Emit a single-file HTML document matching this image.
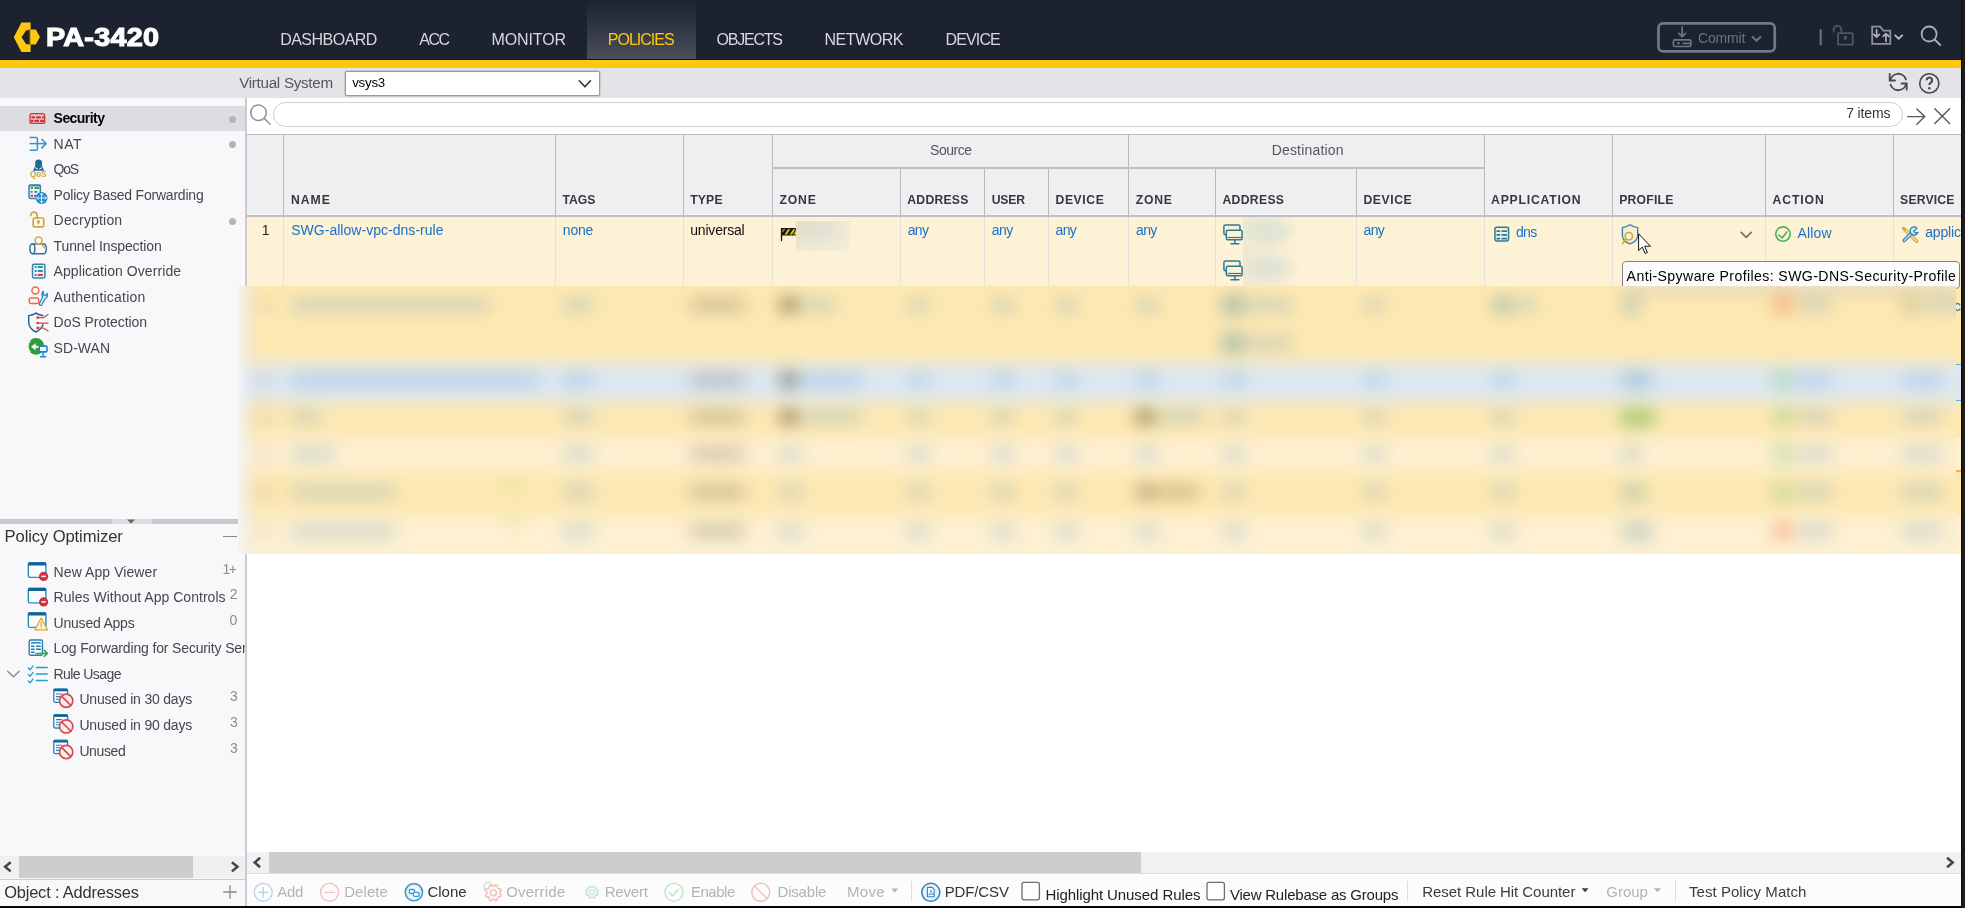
<!DOCTYPE html><html><head><meta charset="utf-8"><title>PA-3420</title><style>
html,body{margin:0;padding:0}
body{width:1965px;height:908px;overflow:hidden;position:relative;background:#fff;font-family:"Liberation Sans",sans-serif;}
.t{position:absolute;white-space:nowrap;}
#w{position:absolute;left:0;top:0;width:1965px;height:908px;overflow:hidden;will-change:transform;}
.b{position:absolute;}
svg{position:absolute;overflow:visible}
</style></head><body><div id="w">
<div class="b" style="left:0px;top:0px;width:1965px;height:60px;background:#1d2231;"></div>
<div class="b" style="left:587px;top:0px;width:109px;height:60px;background:#2f3442;background:linear-gradient(to bottom,#1d2231 0%,#2f3442 42%,#4c505c 100%);"></div>
<div class="b" style="left:0px;top:59px;width:1965px;height:1px;background:#0d1230;"></div>
<div class="b" style="left:0px;top:60px;width:1965px;height:8px;background:#fdc80d;"></div>
<div class="b" style="left:0px;top:68px;width:1965px;height:30px;background:#e3e3e8;"></div>
<svg style="left:0;top:0;pointer-events:none" width="1965" height="908" viewBox="0 0 1965 908" fill="none" stroke-linecap="round" stroke-linejoin="round"><path d="M21.4 22.6H30.6V30.2H26.2L21.6 37.2L26.2 44.2H30.6V52H21.4L13.8 37.2Z" fill="#fdc80d" stroke="none"/><path d="M30.2 29.6H35.8L39.9 36.9L35.8 44.6H30.2Z" fill="#fdc80d" stroke="none"/><path d="M29.3 29.6V44.6" stroke="#6a5a1c" stroke-width="0.9"/></svg>
<span class="t" style="left:46.30px;top:25.00px;font-size:25.4px;line-height:25.4px;color:#fff;font-weight:700;-webkit-text-stroke:1.1px #fff;transform-origin:0 0;transform:scaleX(1.135);letter-spacing:0.2px;">PA-3420</span>
<span class="t" style="left:280.20px;top:32.00px;font-size:16px;line-height:16px;color:#d6d8dc;letter-spacing:-0.522px;">DASHBOARD</span>
<span class="t" style="left:419.30px;top:32.00px;font-size:16px;line-height:16px;color:#d6d8dc;letter-spacing:-1.525px;">ACC</span>
<span class="t" style="left:491.50px;top:32.00px;font-size:16px;line-height:16px;color:#d6d8dc;letter-spacing:-0.125px;">MONITOR</span>
<span class="t" style="left:607.80px;top:32.00px;font-size:16px;line-height:16px;color:#fdc80d;letter-spacing:-0.993px;">POLICIES</span>
<span class="t" style="left:716.50px;top:32.00px;font-size:16px;line-height:16px;color:#d6d8dc;letter-spacing:-1.208px;">OBJECTS</span>
<span class="t" style="left:824.50px;top:32.00px;font-size:16px;line-height:16px;color:#d6d8dc;letter-spacing:-0.458px;">NETWORK</span>
<span class="t" style="left:945.50px;top:32.00px;font-size:16px;line-height:16px;color:#d6d8dc;letter-spacing:-0.865px;">DEVICE</span>
<svg style="left:0;top:0;pointer-events:none" width="1965" height="908" viewBox="0 0 1965 908" fill="none" stroke-linecap="round" stroke-linejoin="round"><rect x="1658.450" y="23.400" width="116.300" height="27.950" rx="4.600" stroke="#727887" stroke-width="2.700"/><g stroke="#6f7584" stroke-width="1.700"><path d="M1682.200 27.200v9.200M1678.900 33.400l3.300 3.300 3.300-3.300"/><rect x="1673.400" y="39.900" width="17.500" height="6.600" rx="1.600"/><path d="M1683.300 43.300h7"/><circle cx="1678.500" cy="43.300" r=".800" fill="none" stroke-width="1.100"/><path d="M1752.600 37l3.900 3.700 3.900-3.700" stroke-width="1.900"/></g></svg>
<span class="t" style="left:1698.10px;top:31.00px;font-size:14px;line-height:14px;color:#6d7383;letter-spacing:-0.190px;">Commit</span>
<svg style="left:0;top:0;pointer-events:none" width="1965" height="908" viewBox="0 0 1965 908" fill="none" stroke-linecap="round" stroke-linejoin="round"><path d="M1820.700 29.200v16" stroke="#6c7280" stroke-width="2.100" stroke-linecap="butt"/><g stroke="#4e5564" stroke-width="1.800"><rect x="1838" y="33.100" width="14.700" height="11.600" rx=".800"/><path d="M1833.600 31.500v-1.800a3.900 3.900 0 0 1 7.800 0v3"/></g><path d="M1845.300 35.600a1.600 1.600 0 0 1 1.600 1.600c0 1.300-1 2.400-1.600 4.300c-.6-1.900-1.600-3-1.600-4.300a1.600 1.600 0 0 1 1.600-1.600z" fill="#4e5564" stroke="none"/><path d="M1872.200 26.700h8l3.200 4h6.900v13.100h-18.100z" stroke="#8e939e" stroke-width="1.800" stroke-linejoin="miter"/><g stroke="#aeb3bd" stroke-width="1.700"><path d="M1876.600 29.800v7M1873.800 34.300l2.800 2.900 2.800-2.900"/><path d="M1885.900 41.500v-7.800M1883.100 36.400l2.800-2.900 2.800 2.900"/><path d="M1895.200 35.400l3.500 3.400 3.500-3.400" stroke-width="2"/></g><g stroke="#a9aeb8" stroke-width="1.800"><circle cx="1929.100" cy="34" r="7.500"/><path d="M1934.600 39.500l5.700 5.500"/></g></svg>
<span class="t" style="left:239.20px;top:75.00px;font-size:15.2px;line-height:15.2px;color:#55575c;letter-spacing:-0.288px;">Virtual System</span>
<div class="b" style="left:345px;top:71px;width:253px;height:23px;background:#fff;border:1px solid #9a9a9a;border-radius:2px;box-shadow:0 0 0 0.5px #b5b5b5;"></div>
<span class="t" style="left:352.20px;top:76.00px;font-size:13.3px;line-height:13.3px;color:#000;letter-spacing:-0.250px;">vsys3</span>
<svg style="left:0;top:0;pointer-events:none" width="1965" height="908" viewBox="0 0 1965 908" fill="none" stroke-linecap="round" stroke-linejoin="round"><path d="M579.3 80.8L584.9 86.8L590.5 80.8" stroke="#333" stroke-width="1.6"/></svg>
<svg style="left:0;top:0;pointer-events:none" width="1965" height="908" viewBox="0 0 1965 908" fill="none" stroke-linecap="round" stroke-linejoin="round"><g stroke="#48484d" stroke-width="1.800"><path d="M1890.300 80.400A8.050 8.050 0 0 1 1905.900 79.400"/><path d="M1889.700 74v6.500h5.300" stroke-linejoin="miter"/><path d="M1906.100 83.600A8.050 8.050 0 0 1 1890.500 84.600"/><path d="M1906.700 89.700v-6.200h-5.200" stroke-linejoin="miter"/></g><circle cx="1929.300" cy="83.400" r="9.600" stroke="#48484d" stroke-width="1.600"/><path d="M1926.700 80.300a2.700 2.700 0 1 1 4.100 2.300c-1 .600-1.500 1.200-1.500 2.500" stroke="#48484d" stroke-width="2.100" stroke-linecap="butt"/><circle cx="1929.300" cy="88.300" r="1.250" fill="#48484d" stroke="none"/></svg>
<div class="b" style="left:0px;top:98px;width:245px;height:808px;background:#f8f8fa;"></div>
<div class="b" style="left:245.2px;top:98px;width:1.6000000000000227px;height:808px;background:#cbcad2;"></div>
<div class="b" style="left:0px;top:106px;width:245px;height:25px;background:#dddde1;"></div>
<span class="t" style="left:53.60px;top:111.00px;font-size:14px;line-height:14px;color:#000;font-weight:700;letter-spacing:-0.550px;">Security</span>
<span class="t" style="left:53.60px;top:137.00px;font-size:14px;line-height:14px;color:#45474d;letter-spacing:0.500px;">NAT</span>
<span class="t" style="left:53.60px;top:162.00px;font-size:14px;line-height:14px;color:#45474d;letter-spacing:-1.200px;">QoS</span>
<span class="t" style="left:53.60px;top:188.00px;font-size:14px;line-height:14px;color:#45474d;letter-spacing:-0.217px;">Policy Based Forwarding</span>
<span class="t" style="left:53.60px;top:213.00px;font-size:14px;line-height:14px;color:#45474d;letter-spacing:0.181px;">Decryption</span>
<span class="t" style="left:53.60px;top:239.00px;font-size:14px;line-height:14px;color:#45474d;letter-spacing:-0.119px;">Tunnel Inspection</span>
<span class="t" style="left:53.60px;top:264.00px;font-size:14px;line-height:14px;color:#45474d;letter-spacing:0.072px;">Application Override</span>
<span class="t" style="left:53.60px;top:290.00px;font-size:14px;line-height:14px;color:#45474d;letter-spacing:0.235px;">Authentication</span>
<span class="t" style="left:53.60px;top:315.00px;font-size:14px;line-height:14px;color:#45474d;letter-spacing:-0.048px;">DoS Protection</span>
<span class="t" style="left:53.60px;top:341.00px;font-size:14px;line-height:14px;color:#45474d;letter-spacing:0.050px;">SD-WAN</span>
<div class="b" style="left:229px;top:115.7px;width:7.2px;height:7.2px;border-radius:50%;background:#b4b4b6;"></div>
<div class="b" style="left:229px;top:141.2px;width:7.2px;height:7.2px;border-radius:50%;background:#b4b4b6;"></div>
<div class="b" style="left:229px;top:217.9px;width:7.2px;height:7.2px;border-radius:50%;background:#b4b4b6;"></div>
<svg style="left:0;top:0;pointer-events:none" width="1965" height="908" viewBox="0 0 1965 908" fill="none" stroke-linecap="round" stroke-linejoin="round"><rect x="30" y="113.7" width="14.7" height="9.7" rx="2" fill="#f1c6ca" stroke="#cb3541" stroke-width="1.3"/><g fill="#cb3541" stroke="none"><rect x="31.4" y="116.2" width="3.6" height="2.2" rx=".6"/><rect x="36" y="116.2" width="5" height="2.2" rx=".6"/><rect x="42" y="116.2" width="2" height="2.2" rx=".6"/><rect x="30.8" y="119.7" width="2.6" height="2.2" rx=".6"/><rect x="34.4" y="119.7" width="4.6" height="2.2" rx=".6"/><rect x="40" y="119.7" width="4" height="2.2" rx=".6"/></g><g stroke="#2a98cc" stroke-width="1.5" stroke-linecap="butt"><path d="M29.6 143.6h15.8"/><path d="M41.8 139.3l4.300 4.300-4.300 4.300" stroke-linecap="round"/><path d="M29.6 137.500h6.500a1.300 1.300 0 0 1 1.300 1.300v10.200a1.300 1.300 0 0 1 -1.300 1.300h-6.500"/></g><ellipse cx="38.6" cy="163" rx="3.5" ry="3.600" fill="#1d6a96"/><path d="M35.600 164.500h6l2.600 6.300h-11.200z" fill="#1d6a96"/><path d="M35.200 167.600l2.200 1.300M42 167.600l-2.200 1.300" stroke="#e8f1f6" stroke-width="1.100"/><text x="30" y="177.200" font-family="Liberation Sans, sans-serif" font-weight="700" font-size="8.400" fill="#cba42a" stroke="none" textLength="16.400" lengthAdjust="spacingAndGlyphs">QoS</text><rect x="29" y="184.900" width="11.400" height="13.600" rx="1.400" stroke="#3b7fae" stroke-width="1.500" fill="#edf2f6"/><path d="M29 185.600h11.400" stroke="#3b7fae" stroke-width="1.600" stroke-linecap="butt"/><path d="M30.600 188h2.400M34.400 188h5" stroke="#2fa84f" stroke-width="1.900" stroke-linecap="butt"/><path d="M30.600 191.900h2M34.400 191.900h3" stroke="#2a8cc8" stroke-width="1.900" stroke-linecap="butt"/><path d="M30.600 195.700h2.400M34 195.700h2" stroke="#d2404a" stroke-width="1.900" stroke-linecap="butt"/><circle cx="41.600" cy="198" r="5.900" fill="#1987c5"/><path d="M41.600 193.400v9.200M37 198h9.200" stroke="#e4f1fa" stroke-width="1.100"/><path d="M40 194.800l1.600-1.700 1.600 1.700M40 201.200l1.600 1.700 1.600-1.700M38.400 196.400l-1.700 1.600 1.700 1.600M44.800 196.400l1.700 1.600-1.700 1.600" stroke="#e4f1fa" stroke-width="1" fill="none"/><g stroke="#d2a43a" stroke-width="1.700"><rect x="33.200" y="218" width="10.500" height="8.900" rx="1.400"/><path d="M30.800 215.600v-.300a3.150 3.150 0 0 1 6.300 0v2.600"/></g><path d="M38.400 219.900a1.500 1.500 0 0 1 1.500 1.500c0 1.100-1 2.200-1.500 3.200c-.5-1-1.500-2.100-1.500-3.200a1.500 1.500 0 0 1 1.500-1.500z" fill="#d2a43a"/><g stroke="#2b75a3" stroke-width="1.500"><path d="M32.400 243.900h11.400c1.500 0 2.500 2.200 2.500 4.900s-1 4.900-2.500 4.900h-11.400"/><ellipse cx="32.400" cy="248.800" rx="2.500" ry="4.900"/></g><g stroke="#dba73a" stroke-width="1.500"><circle cx="38.600" cy="240.400" r="3.500" fill="#f8f8fa"/><path d="M41.200 243.200l3.400 4.400"/></g><rect x="32.500" y="264.200" width="12.400" height="13.800" rx="1.600" stroke="#3b7fae" stroke-width="1.500" fill="#eaf1f6"/><path d="M34.800 267.10h1.800M37.800 267.10h5" stroke="#2fa84f" stroke-width="2" stroke-linecap="butt"/><path d="M34.800 271.05h1.800M37.800 271.05h5" stroke="#2a8cc8" stroke-width="2" stroke-linecap="butt"/><path d="M34.800 275.00h1.800M37.800 275.00h5" stroke="#d2404a" stroke-width="2" stroke-linecap="butt"/><g stroke="#ee6a45" stroke-width="1.500"><circle cx="35.400" cy="290.500" r="3.500"/><rect x="29.300" y="298" width="9.400" height="5.400" rx="1.600"/></g><path d="M43.400 291.400l-.200 3 2 1.300 2-2.200c.8 2 .1 4.300-2 5l-3.500 6.300c-.8 1.300-3 .2-2.300-1.300l3.300-6.500c-1.300-1.700-1-4.400.7-5.600z" stroke="#2a86c2" stroke-width="1.300" fill="#eef5fa"/><path d="M36 313.200c-2.300 1.500-4.800 2.200-7.300 2.400v6.400c0 4.600 3 8 7.300 10c3.400-1.600 6-4.100 7-7.400" stroke="#1f5d8a" stroke-width="1.400"/><path d="M36 313.200c2 1.300 4.300 2.100 6.800 2.300" stroke="#1f5d8a" stroke-width="1.400"/><g stroke="#d2404a" stroke-width="1.200"><path d="M48 314.600l-4.600 3.100h-5.400M48 323.100h-10M48 331l-4.600-3h-5.400"/></g><g fill="#d2404a" stroke="none"><circle cx="37.700" cy="317.700" r="1.400"/><circle cx="37.700" cy="323.100" r="1.400"/><circle cx="37.700" cy="328" r="1.400"/></g><circle cx="36" cy="346.400" r="8.300" fill="#2f9c3c"/><path d="M31 346.800l4.600-3.800v2.400c3 0 5.400 1.400 6 4.600c-1.500-1.700-3.400-2.200-6-2.200v2.600z" fill="#eef7ee"/><path d="M30.200 341c-2.800 3.200-2.800 7.800 0 11" stroke="#eef7ee" stroke-width="1.100"/><rect x="39.200" y="346.100" width="7.800" height="5.800" rx="1" stroke="#1e88c8" stroke-width="1.600" fill="#f4f8fb"/><path d="M43.100 352.200v4M40.600 356.700h5.200" stroke="#1e88c8" stroke-width="1.500"/></svg>
<div class="b" style="left:0px;top:519px;width:238px;height:5px;background:#c7c7cd;"></div>
<div class="b" style="left:112px;top:519px;width:40px;height:5px;background:#dcdce0;"></div>
<svg style="left:127px;top:519px" width="8" height="5" viewBox="0 0 8 5"><path d="M0 0.5h8L4 4.5z" fill="#666"/></svg>
<span class="t" style="left:4.60px;top:529.00px;font-size:16.6px;line-height:16.6px;color:#333;letter-spacing:-0.112px;">Policy Optimizer</span>
<div class="b" style="left:222.5px;top:535.5px;width:14.0px;height:1.5px;background:#888;"></div>
<span class="t" style="left:53.60px;top:565.00px;font-size:14px;line-height:14px;color:#45474d;letter-spacing:0.077px;">New App Viewer</span>
<span class="t" style="left:222.40px;top:562.00px;font-size:14px;line-height:14px;color:#8c8c90;letter-spacing:-1.400px;">1+</span>
<span class="t" style="left:53.60px;top:590.00px;font-size:14px;line-height:14px;color:#45474d;letter-spacing:0.030px;">Rules Without App Controls</span>
<span class="t" style="left:229.80px;top:587.00px;font-size:14px;line-height:14px;color:#8c8c90;">2</span>
<span class="t" style="left:53.60px;top:616.00px;font-size:14px;line-height:14px;color:#45474d;letter-spacing:-0.225px;">Unused Apps</span>
<span class="t" style="left:229.60px;top:613.00px;font-size:14px;line-height:14px;color:#8c8c90;">0</span>
<span class="t" style="left:53.60px;top:667.00px;font-size:14px;line-height:14px;color:#45474d;letter-spacing:-0.592px;">Rule Usage</span>
<span class="t" style="left:79.40px;top:692.00px;font-size:14px;line-height:14px;color:#45474d;letter-spacing:-0.194px;">Unused in 30 days</span>
<span class="t" style="left:229.90px;top:689.00px;font-size:14px;line-height:14px;color:#8c8c90;">3</span>
<span class="t" style="left:79.40px;top:718.00px;font-size:14px;line-height:14px;color:#45474d;letter-spacing:-0.194px;">Unused in 90 days</span>
<span class="t" style="left:229.90px;top:715.00px;font-size:14px;line-height:14px;color:#8c8c90;">3</span>
<span class="t" style="left:79.40px;top:744.00px;font-size:14px;line-height:14px;color:#45474d;letter-spacing:-0.390px;">Unused</span>
<span class="t" style="left:229.90px;top:741.00px;font-size:14px;line-height:14px;color:#8c8c90;">3</span>
<div class="b" style="left:0;top:636px;width:245px;height:26px;overflow:hidden;"><span class="t" style="left:53.60px;top:5.00px;font-size:14px;line-height:14px;color:#45474d;letter-spacing:-0.154px;">Log Forwarding for Security Services</span></div>
<svg style="left:0;top:0;pointer-events:none" width="1965" height="908" viewBox="0 0 1965 908" fill="none" stroke-linecap="round" stroke-linejoin="round"><rect x="28.300" y="562.8" width="17.600" height="14.600" rx="1.600" stroke="#2b8cc0" stroke-width="1.400" fill="#fbfcfd"/><path d="M28.300 564h17.600" stroke="#15618f" stroke-width="3" stroke-linecap="butt"/><circle cx="43.600" cy="576.4" r="4.600" fill="#cf2f3e"/><path d="M41.400 576.4h4.400" stroke="#fff" stroke-width="1.500" stroke-linecap="butt"/><rect x="28.300" y="588.3" width="17.600" height="14.600" rx="1.600" stroke="#2b8cc0" stroke-width="1.400" fill="#fbfcfd"/><path d="M28.300 589.5h17.600" stroke="#15618f" stroke-width="3" stroke-linecap="butt"/><circle cx="43.600" cy="601.9" r="4.600" fill="#cf2f3e"/><path d="M41.400 601.9h4.400" stroke="#fff" stroke-width="1.500" stroke-linecap="butt"/><rect x="28.300" y="612.8" width="17.600" height="14.600" rx="1.600" stroke="#2b8cc0" stroke-width="1.400" fill="#fbfcfd"/><path d="M28.300 614h17.600" stroke="#15618f" stroke-width="3" stroke-linecap="butt"/><path d="M41.200 618l6.200 11.800h-12.400z" fill="#fdf6e0" stroke="#e0a526" stroke-width="1.300"/><path d="M41.200 622.2v3.800" stroke="#e0a526" stroke-width="1.300"/><circle cx="41.200" cy="627.8" r=".700" fill="#e0a526"/><rect x="29.200" y="640" width="13.300" height="15.300" rx="1.600" stroke="#2a7fb2" stroke-width="1.400" fill="#fbfcfd"/><path d="M31 642.800h9.800" stroke="#2a7fb2" stroke-width="1.500" stroke-linecap="butt"/><path d="M31 646.300h3.600M36 646.300h4.800M31 649.300h3.600M36 649.300h4.800M31 652.300h3.600" stroke="#2a7fb2" stroke-width="1.400" stroke-linecap="butt"/><path d="M36 653.400h10.800M44.200 650.400l3.200 3-3.200 3" stroke="#2fa84f" stroke-width="1.500"/><path d="M28.400 668.0l1.600 1.800 3-3.800" stroke="#2b9bd0" stroke-width="1.300"/><path d="M36.400 667.4h10.800" stroke="#2b9bd0" stroke-width="1.500"/><path d="M28.400 674.5l1.600 1.800 3-3.800" stroke="#2b9bd0" stroke-width="1.300"/><path d="M36.400 673.9h10.800" stroke="#2b9bd0" stroke-width="1.500"/><path d="M28.400 681.0l1.600 1.800 3-3.800" stroke="#2b9bd0" stroke-width="1.300"/><path d="M36.400 680.4h10.800" stroke="#2b9bd0" stroke-width="1.500"/><path d="M7.600 671.200l5.800 5.600 5.800-5.600" stroke="#8a8a8e" stroke-width="1.400"/><rect x="53.800" y="689.0" width="13.800" height="13.400" rx="1.400" stroke="#2a7fb2" stroke-width="1.300" fill="#fbfcfd"/><path d="M53.800 690.1999999999999h13.800" stroke="#15618f" stroke-width="2.200" stroke-linecap="butt"/><path d="M56 694.0h6M56 696.6h4M56 699.1999999999999h3" stroke="#2a7fb2" stroke-width="1.100" stroke-linecap="butt"/><circle cx="66.200" cy="700.8" r="6.600" fill="#fdf3f3" stroke="#e0444f" stroke-width="1.700"/><path d="M61.600 696.1999999999999l9.200 9.200" stroke="#e0444f" stroke-width="1.700"/><rect x="53.800" y="714.6" width="13.800" height="13.400" rx="1.400" stroke="#2a7fb2" stroke-width="1.300" fill="#fbfcfd"/><path d="M53.800 715.8h13.800" stroke="#15618f" stroke-width="2.200" stroke-linecap="butt"/><path d="M56 719.6h6M56 722.2h4M56 724.8h3" stroke="#2a7fb2" stroke-width="1.100" stroke-linecap="butt"/><circle cx="66.200" cy="726.4" r="6.600" fill="#fdf3f3" stroke="#e0444f" stroke-width="1.700"/><path d="M61.600 721.8l9.200 9.200" stroke="#e0444f" stroke-width="1.700"/><rect x="53.800" y="740.2" width="13.800" height="13.400" rx="1.400" stroke="#2a7fb2" stroke-width="1.300" fill="#fbfcfd"/><path d="M53.800 741.4h13.800" stroke="#15618f" stroke-width="2.200" stroke-linecap="butt"/><path d="M56 745.2h6M56 747.8000000000001h4M56 750.4h3" stroke="#2a7fb2" stroke-width="1.100" stroke-linecap="butt"/><circle cx="66.200" cy="752.0" r="6.600" fill="#fdf3f3" stroke="#e0444f" stroke-width="1.700"/><path d="M61.600 747.4l9.200 9.200" stroke="#e0444f" stroke-width="1.700"/></svg>
<div class="b" style="left:0px;top:856px;width:245px;height:22px;background:#f0f0f3;"></div>
<div class="b" style="left:19px;top:856px;width:174px;height:22px;background:#cdcdd0;"></div>
<svg style="left:0;top:0;pointer-events:none" width="1965" height="908" viewBox="0 0 1965 908" fill="none" stroke-linecap="round" stroke-linejoin="round"><path d="M10.70 862.20L5.10 866.80L10.70 871.40" stroke="#454548" stroke-width="2.5" stroke-linecap="butt" stroke-linejoin="miter"/></svg>
<svg style="left:0;top:0;pointer-events:none" width="1965" height="908" viewBox="0 0 1965 908" fill="none" stroke-linecap="round" stroke-linejoin="round"><path d="M231.90 862.20L237.50 866.80L231.90 871.40" stroke="#454548" stroke-width="2.5" stroke-linecap="butt" stroke-linejoin="miter"/></svg>
<div class="b" style="left:0px;top:878.5px;width:245px;height:1.5px;background:#c9c9cf;"></div>
<span class="t" style="left:4.20px;top:884.00px;font-size:16.4px;line-height:16.4px;color:#333;letter-spacing:-0.172px;">Object : Addresses</span>
<svg style="left:222.5px;top:885px" width="14" height="14" viewBox="0 0 14 14"><path d="M7 0.3v13.4M0.3 7h13.4" stroke="#888" stroke-width="1.3" fill="none"/></svg>
<svg style="left:0;top:0;pointer-events:none" width="1965" height="908" viewBox="0 0 1965 908" fill="none" stroke-linecap="round" stroke-linejoin="round"><g stroke="#939397" stroke-width="1.500"><circle cx="258.500" cy="112.700" r="7.800"/><path d="M264.200 118.400l6 5.800"/></g><g stroke="#58585c" stroke-width="1.400"><path d="M1907.600 116.600h17.300M1916.800 108.900l8 7.700-8 7.700"/><path d="M1934.800 108.800l14.800 14.800M1949.600 108.800l-14.800 14.800"/></g></svg>
<div class="b" style="left:272.8px;top:101.8px;width:1628.7px;height:23.2px;border:1px solid #cdcdd2;border-radius:13px;background:#fff;"></div>
<span class="t" style="left:1846.20px;top:106.00px;font-size:14px;line-height:14px;color:#333;letter-spacing:-0.154px;">7 items</span>
<div class="b" style="left:247px;top:134px;width:1714px;height:82px;background:#efeff2;"></div>
<div class="b" style="left:247px;top:134px;width:1714px;height:1px;background:#b9b9bd;"></div>
<div class="b" style="left:247px;top:214px;width:1714px;height:1px;background:#f6f6f9;"></div>
<div class="b" style="left:247px;top:215px;width:1714px;height:1.5999999999999943px;background:#bcbec3;"></div>
<div class="b" style="left:283px;top:135px;width:1px;height:80px;background:#b7b6bb;"></div>
<div class="b" style="left:555px;top:135px;width:1px;height:80px;background:#b7b6bb;"></div>
<div class="b" style="left:683px;top:135px;width:1px;height:80px;background:#b7b6bb;"></div>
<div class="b" style="left:772px;top:135px;width:1px;height:80px;background:#b7b6bb;"></div>
<div class="b" style="left:900px;top:168px;width:1px;height:47px;background:#b7b6bb;"></div>
<div class="b" style="left:984px;top:168px;width:1px;height:47px;background:#b7b6bb;"></div>
<div class="b" style="left:1048px;top:168px;width:1px;height:47px;background:#b7b6bb;"></div>
<div class="b" style="left:1128px;top:135px;width:1px;height:80px;background:#b7b6bb;"></div>
<div class="b" style="left:1215px;top:168px;width:1px;height:47px;background:#b7b6bb;"></div>
<div class="b" style="left:1356px;top:168px;width:1px;height:47px;background:#b7b6bb;"></div>
<div class="b" style="left:1484px;top:135px;width:1px;height:80px;background:#b7b6bb;"></div>
<div class="b" style="left:1612px;top:135px;width:1px;height:80px;background:#b7b6bb;"></div>
<div class="b" style="left:1765px;top:135px;width:1px;height:80px;background:#b7b6bb;"></div>
<div class="b" style="left:1893px;top:135px;width:1px;height:80px;background:#b7b6bb;"></div>
<div class="b" style="left:772px;top:167.4px;width:713px;height:1.1999999999999886px;background:#bdbdc2;"></div>
<span class="t" style="left:291.00px;top:194.00px;font-size:12.2px;line-height:12.2px;color:#36383d;font-weight:700;letter-spacing:0.975px;">NAME</span>
<span class="t" style="left:562.50px;top:194.00px;font-size:12.2px;line-height:12.2px;color:#36383d;font-weight:700;letter-spacing:-0.033px;">TAGS</span>
<span class="t" style="left:690.20px;top:194.00px;font-size:12.2px;line-height:12.2px;color:#36383d;font-weight:700;letter-spacing:0.175px;">TYPE</span>
<span class="t" style="left:779.60px;top:194.00px;font-size:12.2px;line-height:12.2px;color:#36383d;font-weight:700;letter-spacing:0.775px;">ZONE</span>
<span class="t" style="left:907.30px;top:194.00px;font-size:12.2px;line-height:12.2px;color:#36383d;font-weight:700;letter-spacing:0.246px;">ADDRESS</span>
<span class="t" style="left:991.80px;top:194.00px;font-size:12.2px;line-height:12.2px;color:#36383d;font-weight:700;letter-spacing:-0.225px;">USER</span>
<span class="t" style="left:1055.50px;top:194.00px;font-size:12.2px;line-height:12.2px;color:#36383d;font-weight:700;letter-spacing:0.585px;">DEVICE</span>
<span class="t" style="left:1135.80px;top:194.00px;font-size:12.2px;line-height:12.2px;color:#36383d;font-weight:700;letter-spacing:0.775px;">ZONE</span>
<span class="t" style="left:1222.50px;top:194.00px;font-size:12.2px;line-height:12.2px;color:#36383d;font-weight:700;letter-spacing:0.312px;">ADDRESS</span>
<span class="t" style="left:1363.50px;top:194.00px;font-size:12.2px;line-height:12.2px;color:#36383d;font-weight:700;letter-spacing:0.565px;">DEVICE</span>
<span class="t" style="left:1491.10px;top:194.00px;font-size:12.2px;line-height:12.2px;color:#36383d;font-weight:700;letter-spacing:0.785px;">APPLICATION</span>
<span class="t" style="left:1619.20px;top:194.00px;font-size:12.2px;line-height:12.2px;color:#36383d;font-weight:700;letter-spacing:0.221px;">PROFILE</span>
<span class="t" style="left:1772.60px;top:194.00px;font-size:12.2px;line-height:12.2px;color:#36383d;font-weight:700;letter-spacing:0.890px;">ACTION</span>
<span class="t" style="left:1900.10px;top:194.00px;font-size:12.2px;line-height:12.2px;color:#36383d;font-weight:700;letter-spacing:0.171px;">SERVICE</span>
<span class="t" style="left:930.10px;top:143.00px;font-size:14px;line-height:14px;color:#55575c;letter-spacing:-0.495px;">Source</span>
<span class="t" style="left:1271.70px;top:143.00px;font-size:14px;line-height:14px;color:#55575c;letter-spacing:0.180px;">Destination</span>
<div class="b" style="left:247px;top:217px;width:1714px;height:70px;background:#fef2d6;"></div>
<div class="b" style="left:283px;top:217px;width:1px;height:70px;background:#e3e3da;"></div>
<div class="b" style="left:555px;top:217px;width:1px;height:70px;background:#e3e3da;"></div>
<div class="b" style="left:683px;top:217px;width:1px;height:70px;background:#e3e3da;"></div>
<div class="b" style="left:772px;top:217px;width:1px;height:70px;background:#e3e3da;"></div>
<div class="b" style="left:900px;top:217px;width:1px;height:70px;background:#e3e3da;"></div>
<div class="b" style="left:984px;top:217px;width:1px;height:70px;background:#e3e3da;"></div>
<div class="b" style="left:1048px;top:217px;width:1px;height:70px;background:#e3e3da;"></div>
<div class="b" style="left:1128px;top:217px;width:1px;height:70px;background:#e3e3da;"></div>
<div class="b" style="left:1215px;top:217px;width:1px;height:70px;background:#e3e3da;"></div>
<div class="b" style="left:1356px;top:217px;width:1px;height:70px;background:#e3e3da;"></div>
<div class="b" style="left:1484px;top:217px;width:1px;height:70px;background:#e3e3da;"></div>
<div class="b" style="left:1612px;top:217px;width:1px;height:70px;background:#e3e3da;"></div>
<div class="b" style="left:1765px;top:217px;width:1px;height:70px;background:#e3e3da;"></div>
<div class="b" style="left:1893px;top:217px;width:1px;height:70px;background:#e3e3da;"></div>
<span class="t" style="left:261.80px;top:223.00px;font-size:14px;line-height:14px;color:#222;">1</span>
<span class="t" style="left:291.20px;top:223.00px;font-size:14px;line-height:14px;color:#1871cb;letter-spacing:0.031px;">SWG-allow-vpc-dns-rule</span>
<span class="t" style="left:562.80px;top:223.00px;font-size:14px;line-height:14px;color:#1871cb;letter-spacing:-0.208px;">none</span>
<span class="t" style="left:690.30px;top:223.00px;font-size:14px;line-height:14px;color:#111;letter-spacing:-0.212px;">universal</span>
<span class="t" style="left:907.70px;top:223.00px;font-size:14px;line-height:14px;color:#1871cb;letter-spacing:-0.613px;">any</span>
<span class="t" style="left:991.80px;top:223.00px;font-size:14px;line-height:14px;color:#1871cb;letter-spacing:-0.613px;">any</span>
<span class="t" style="left:1055.50px;top:223.00px;font-size:14px;line-height:14px;color:#1871cb;letter-spacing:-0.612px;">any</span>
<span class="t" style="left:1136.00px;top:223.00px;font-size:14px;line-height:14px;color:#1871cb;letter-spacing:-0.612px;">any</span>
<span class="t" style="left:1363.50px;top:223.00px;font-size:14px;line-height:14px;color:#1871cb;letter-spacing:-0.612px;">any</span>
<span class="t" style="left:1516.00px;top:225.00px;font-size:14px;line-height:14px;color:#1871cb;letter-spacing:-0.712px;">dns</span>
<span class="t" style="left:1797.40px;top:226.00px;font-size:14px;line-height:14px;color:#1871cb;letter-spacing:0.169px;">Allow</span>
<div class="b" style="left:1920px;top:220px;width:41px;height:30px;overflow:hidden;"><span class="t" style="left:5.20px;top:5.00px;font-size:14px;line-height:14px;color:#1871cb;letter-spacing:-0.157px;">application-default</span></div>
<svg style="left:0;top:0;pointer-events:none" width="1965" height="908" viewBox="0 0 1965 908" fill="none" stroke-linecap="round" stroke-linejoin="round"><path d="M781.500 228.600v12" stroke="#1c1a14" stroke-width="1.300"/><rect x="781" y="228" width="15" height="7.400" rx=".800" fill="#1c1a14"/><path d="M782.400 231.200l1.400-2.200h1.200l-2.600 3.800zM784.600 234.400l3.400-5.200h2.200l-3.400 5.200zM789.800 234.400l3.400-5.200h2.200l-3.400 5.200z" fill="#f0c419"/><path d="M795 231.800l1-1.500v4.100h-2.700z" fill="#f0c419"/><g stroke="#2b7a96" stroke-width="1.5"><rect x="1223.9" y="224.89999999999998" width="16.1" height="9.9" rx="1.5"/><rect x="1226.3" y="230.29999999999998" width="15.8" height="9.5" rx="1.5" fill="#fef2d6"/><path d="M1227.6 237.5h13.6" stroke-width="1.2" stroke-linecap="butt"/><path d="M1234.9 240.0v3.4M1231.0 243.7h7.9"/></g><g stroke="#2b7a96" stroke-width="1.5"><rect x="1223.9" y="260.9" width="16.1" height="9.9" rx="1.5"/><rect x="1226.3" y="266.3" width="15.8" height="9.5" rx="1.5" fill="#fef2d6"/><path d="M1227.6 273.5h13.6" stroke-width="1.2" stroke-linecap="butt"/><path d="M1234.9 276.0v3.4M1231.0 279.7h7.9"/></g><rect x="1494.95" y="227.35" width="13.6" height="13.6" rx="1.6" stroke="#2b7a96" stroke-width="1.5" fill="#f1efe0"/><path d="M1496.5 231.2h3.6M1501.5 231.2h5.5M1496.5 234.9h3.6M1501.5 234.9h5.5M1496.5 238.6h3.6M1501.5 238.6h5.5" stroke="#2b7a96" stroke-width="1.7" stroke-linecap="butt"/><path d="M1630 224.8C1627.5 226.6 1625 227.4 1622.4 227.6V235.5C1622.4 239.5 1625.5 242.3 1630 243.8C1634.5 242.3 1637.7 239.5 1637.7 235.5V227.6C1635 227.4 1632.5 226.6 1630 224.8Z" stroke="#3a86a4" stroke-width="1.4" fill="#f4efdc"/><circle cx="1628.8" cy="236.2" r="3.7" stroke="#d9a62e" stroke-width="1.6" fill="#fdf1d4"/><path d="M1626.1 239.1l-3.6 4.6" stroke="#d9a62e" stroke-width="1.6"/><path d="M1741.2 232.4l5 5 5-5" stroke="#707074" stroke-width="1.6"/><circle cx="1782.95" cy="234.05" r="7.2" stroke="#45b455" stroke-width="1.6"/><path d="M1778.9 235.2l3.3 2.7 4.6-6" stroke="#45b455" stroke-width="1.6"/><path d="M1904.2 229l12.4 12.2" stroke="#d6a531" stroke-width="3.4"/><path d="M1904.2 229l12.4 12.2" stroke="#f6e3b0" stroke-width="1.2"/><path d="M1902.9 227.7l2 1.8" stroke="#d6a531" stroke-width="2"/><path d="M1904.2 240.6l8.6-8.8" stroke="#2b86c2" stroke-width="3.6"/><path d="M1904.2 240.6l8.6-8.8" stroke="#cfe3ee" stroke-width="1.3"/><path d="M1917 228.1a4.1 4.1 0 1 0 1 4.3l-2.6.5-1.5-1.7z" fill="#cfe3ee" stroke="#2b86c2" stroke-width="1.3"/></svg>
<div class="b" style="left:796.1px;top:221px;width:53.7px;height:29.8px;background:linear-gradient(to bottom,rgba(254,242,214,0) 0%,rgba(254,242,214,0) 35%,rgba(254,242,214,0.5) 100%),linear-gradient(to right,#e7dfc9 0%,#e0e1d2 35%,#e4e4d3 60%,#f3ebd4 100%);"></div>
<div class="b" style="left:1243.2px;top:217px;width:60px;height:69px;background:radial-gradient(ellipse 31px 16px at 25px 14.5px,rgba(224,228,212,1) 0%,rgba(224,228,212,0.75) 50%,rgba(224,228,212,0) 100%),radial-gradient(ellipse 31px 16px at 25px 51px,rgba(224,228,212,1) 0%,rgba(224,228,212,0.75) 50%,rgba(224,228,212,0) 100%),linear-gradient(to right,#efe9d3 0%,#f0ead3 45%,#fbf0d6 85%,#fef2d6 100%);"></div>
<div class="b" style="left:1956px;top:286px;width:5px;height:77.5px;background:#fde8b2;"></div>
<div class="b" style="left:1956px;top:363.5px;width:5px;height:37.0px;background:#dce7f2;"></div>
<div class="b" style="left:1956px;top:400.5px;width:5px;height:37.5px;background:#fde8b2;"></div>
<div class="b" style="left:1956px;top:438px;width:5px;height:33px;background:#fef0d1;"></div>
<div class="b" style="left:1956px;top:471px;width:5px;height:44.60000000000002px;background:#fde8b2;"></div>
<div class="b" style="left:1956px;top:515.6px;width:5px;height:38.0px;background:#fef0d1;"></div>
<div class="b" style="left:1956px;top:363.6px;width:5px;height:1.2px;background:#6aaade;"></div><div class="b" style="left:1956px;top:400px;width:5px;height:1.2px;background:#6aaade;"></div>
<div class="b" style="left:1956px;top:469.6px;width:5px;height:2.8px;background:#f6b42c;"></div>
<div class="b" style="left:1956px;top:296px;width:5px;height:22px;overflow:hidden;"><span class="t" style="left:-30.80px;top:3.00px;font-size:14px;line-height:14px;color:#1871cb;letter-spacing:-0.157px;">application-default</span></div>
<div class="b" style="left:1621.5px;top:261px;width:336.7px;height:26px;background:#fcfcff;border:1px solid #808080;border-radius:4px;"></div>
<span class="t" style="left:1626.60px;top:269.00px;font-size:14.1px;line-height:14.1px;color:#000;letter-spacing:0.400px;">Anti-Spyware Profiles: SWG-DNS-Security-Profile</span>
<svg style="left:0;top:0;pointer-events:none" width="1965" height="908" viewBox="0 0 1965 908" fill="none" stroke-linecap="round" stroke-linejoin="round"><path d="M1638.6 234.2v16.400l3.700-3.500 2.800 6.400 2.300-1-2.800-6.300h5.400z" fill="#fff" stroke="#111" stroke-width="1" stroke-linejoin="miter"/></svg>
<div class="b" style="left:238px;top:286px;width:1718px;height:267.6px;overflow:hidden;background:#fdeab8;">
<div class="b" style="left:-40px;top:-40px;width:1798px;height:347.6px;filter:blur(8.5px);">
<div class="b" style="left:-8.0px;top:-16.0px;width:1820.0px;height:56.0px;background:#fde8b2;"></div>
<div class="b" style="left:-8.0px;top:40.0px;width:1820.0px;height:77.5px;background:#fde8b2;"></div>
<div class="b" style="left:-8.0px;top:117.5px;width:1820.0px;height:37.0px;background:#dce7f2;"></div>
<div class="b" style="left:-8.0px;top:154.5px;width:1820.0px;height:37.5px;background:#fde8b2;"></div>
<div class="b" style="left:-8.0px;top:192.0px;width:1820.0px;height:33.0px;background:#fef0d1;"></div>
<div class="b" style="left:-8.0px;top:225.0px;width:1820.0px;height:44.6px;background:#fde8b2;"></div>
<div class="b" style="left:-8.0px;top:269.6px;width:1820.0px;height:38.0px;background:#fef0d1;"></div>
<div class="b" style="left:-8.0px;top:307.6px;width:1820.0px;height:56.4px;background:#fef0d1;"></div>
<div class="b" style="left:-8.0px;top:-16.0px;width:55.0px;height:380.0px;background:#f8f8fa;"></div>
<div class="b" style="left:47.0px;top:-16.0px;width:2.0px;height:380.0px;background:#c9c9cf;"></div>
<div class="b" style="left:1424.0px;top:16.0px;width:338.0px;height:25.0px;background:rgba(255,255,255,0.55);"></div>
<div class="b" style="left:1424.0px;top:39.0px;width:338.0px;height:4.0px;background:rgba(110,110,110,0.55);"></div>
<div class="b" style="left:63.0px;top:54.0px;width:7.0px;height:10.0px;background:rgba(17,17,17,0.25);border-radius:3px;"></div>
<div class="b" style="left:93.0px;top:54.0px;width:199.0px;height:10.0px;background:rgba(22,114,196,0.26);border-radius:3px;"></div>
<div class="b" style="left:365.0px;top:54.0px;width:30.0px;height:10.0px;background:rgba(22,114,196,0.26);border-radius:3px;"></div>
<div class="b" style="left:492.0px;top:54.0px;width:55.0px;height:10.0px;background:rgba(17,17,17,0.26);border-radius:3px;"></div>
<div class="b" style="left:709.5px;top:54.0px;width:21.5px;height:10.0px;background:rgba(22,114,196,0.26);border-radius:3px;"></div>
<div class="b" style="left:794.0px;top:54.0px;width:21.5px;height:10.0px;background:rgba(22,114,196,0.26);border-radius:3px;"></div>
<div class="b" style="left:857.5px;top:54.0px;width:21.5px;height:10.0px;background:rgba(22,114,196,0.26);border-radius:3px;"></div>
<div class="b" style="left:938.0px;top:54.0px;width:21.5px;height:10.0px;background:rgba(22,114,196,0.26);border-radius:3px;"></div>
<div class="b" style="left:1165.5px;top:54.0px;width:21.5px;height:10.0px;background:rgba(22,114,196,0.26);border-radius:3px;"></div>
<div class="b" style="left:583.0px;top:53.0px;width:15.0px;height:12.0px;background:rgba(58,48,16,0.75);border-radius:3px;"></div>
<div class="b" style="left:601.0px;top:54.0px;width:36.0px;height:10.0px;background:rgba(22,114,196,0.26);border-radius:3px;"></div>
<div class="b" style="left:1025.0px;top:50.0px;width:20.0px;height:18.0px;background:rgba(42,127,159,0.45);border-radius:3px;"></div>
<div class="b" style="left:1048.0px;top:54.0px;width:46.0px;height:10.0px;background:rgba(22,114,196,0.26);border-radius:3px;"></div>
<div class="b" style="left:1025.0px;top:88.0px;width:20.0px;height:18.0px;background:rgba(42,127,159,0.45);border-radius:3px;"></div>
<div class="b" style="left:1048.0px;top:92.0px;width:46.0px;height:10.0px;background:rgba(22,114,196,0.26);border-radius:3px;"></div>
<div class="b" style="left:1296.0px;top:51.5px;width:16.0px;height:15.0px;background:rgba(42,127,159,0.45);border-radius:3px;"></div>
<div class="b" style="left:1316.0px;top:54.0px;width:22.0px;height:10.0px;background:rgba(22,114,196,0.26);border-radius:3px;"></div>
<div class="b" style="left:1424.0px;top:51.0px;width:18.0px;height:16.0px;background:rgba(42,127,159,0.3);border-radius:3px;"></div>
<div class="b" style="left:1576.0px;top:51.0px;width:17.0px;height:16.0px;background:rgba(240,112,64,0.55);border-radius:3px;"></div>
<div class="b" style="left:1599.0px;top:54.0px;width:35.0px;height:10.0px;background:rgba(22,114,196,0.26);border-radius:3px;"></div>
<div class="b" style="left:1704.0px;top:51.5px;width:16.0px;height:15.0px;background:rgba(138,154,106,0.45);border-radius:3px;"></div>
<div class="b" style="left:1726.0px;top:54.0px;width:66.0px;height:10.0px;background:rgba(22,114,196,0.26);border-radius:3px;"></div>
<div class="b" style="left:63.0px;top:129.0px;width:7.0px;height:10.0px;background:rgba(17,17,17,0.25);border-radius:3px;"></div>
<div class="b" style="left:93.0px;top:129.0px;width:249.0px;height:10.0px;background:rgba(22,114,196,0.26);border-radius:3px;"></div>
<div class="b" style="left:365.0px;top:129.0px;width:30.0px;height:10.0px;background:rgba(22,114,196,0.26);border-radius:3px;"></div>
<div class="b" style="left:492.0px;top:129.0px;width:55.0px;height:10.0px;background:rgba(17,17,17,0.26);border-radius:3px;"></div>
<div class="b" style="left:709.5px;top:129.0px;width:21.5px;height:10.0px;background:rgba(22,114,196,0.26);border-radius:3px;"></div>
<div class="b" style="left:794.0px;top:129.0px;width:21.5px;height:10.0px;background:rgba(22,114,196,0.26);border-radius:3px;"></div>
<div class="b" style="left:857.5px;top:129.0px;width:21.5px;height:10.0px;background:rgba(22,114,196,0.26);border-radius:3px;"></div>
<div class="b" style="left:938.0px;top:129.0px;width:21.5px;height:10.0px;background:rgba(22,114,196,0.26);border-radius:3px;"></div>
<div class="b" style="left:1165.5px;top:129.0px;width:21.5px;height:10.0px;background:rgba(22,114,196,0.26);border-radius:3px;"></div>
<div class="b" style="left:583.0px;top:128.0px;width:15.0px;height:12.0px;background:rgba(58,48,16,0.75);border-radius:3px;"></div>
<div class="b" style="left:601.0px;top:129.0px;width:63.0px;height:10.0px;background:rgba(22,114,196,0.26);border-radius:3px;"></div>
<div class="b" style="left:1025.0px;top:129.0px;width:22.0px;height:10.0px;background:rgba(22,114,196,0.26);border-radius:3px;"></div>
<div class="b" style="left:1294.0px;top:129.0px;width:22.0px;height:10.0px;background:rgba(22,114,196,0.26);border-radius:3px;"></div>
<div class="b" style="left:1424.0px;top:126.0px;width:30.0px;height:16.0px;background:rgba(42,127,159,0.3);border-radius:3px;"></div>
<div class="b" style="left:1576.0px;top:126.0px;width:17.0px;height:16.0px;background:rgba(61,181,74,0.35);border-radius:3px;"></div>
<div class="b" style="left:1599.0px;top:129.0px;width:35.0px;height:10.0px;background:rgba(22,114,196,0.26);border-radius:3px;"></div>
<div class="b" style="left:1704.0px;top:129.0px;width:40.0px;height:10.0px;background:rgba(22,114,196,0.26);border-radius:3px;"></div>
<div class="b" style="left:63.0px;top:166.0px;width:7.0px;height:10.0px;background:rgba(17,17,17,0.25);border-radius:3px;"></div>
<div class="b" style="left:93.0px;top:166.0px;width:29.0px;height:10.0px;background:rgba(22,114,196,0.26);border-radius:3px;"></div>
<div class="b" style="left:365.0px;top:166.0px;width:30.0px;height:10.0px;background:rgba(22,114,196,0.26);border-radius:3px;"></div>
<div class="b" style="left:492.0px;top:166.0px;width:55.0px;height:10.0px;background:rgba(17,17,17,0.26);border-radius:3px;"></div>
<div class="b" style="left:709.5px;top:166.0px;width:21.5px;height:10.0px;background:rgba(22,114,196,0.26);border-radius:3px;"></div>
<div class="b" style="left:794.0px;top:166.0px;width:21.5px;height:10.0px;background:rgba(22,114,196,0.26);border-radius:3px;"></div>
<div class="b" style="left:857.5px;top:166.0px;width:21.5px;height:10.0px;background:rgba(22,114,196,0.26);border-radius:3px;"></div>
<div class="b" style="left:1165.5px;top:166.0px;width:21.5px;height:10.0px;background:rgba(22,114,196,0.26);border-radius:3px;"></div>
<div class="b" style="left:583.0px;top:165.0px;width:15.0px;height:12.0px;background:rgba(58,48,16,0.75);border-radius:3px;"></div>
<div class="b" style="left:601.0px;top:166.0px;width:63.0px;height:10.0px;background:rgba(22,114,196,0.26);border-radius:3px;"></div>
<div class="b" style="left:939.0px;top:165.0px;width:15.0px;height:12.0px;background:rgba(58,48,16,0.75);border-radius:3px;"></div>
<div class="b" style="left:957.0px;top:166.0px;width:50.0px;height:10.0px;background:rgba(22,114,196,0.26);border-radius:3px;"></div>
<div class="b" style="left:1025.0px;top:166.0px;width:22.0px;height:10.0px;background:rgba(22,114,196,0.26);border-radius:3px;"></div>
<div class="b" style="left:1294.0px;top:166.0px;width:22.0px;height:10.0px;background:rgba(22,114,196,0.26);border-radius:3px;"></div>
<div class="b" style="left:1422.0px;top:162.5px;width:35.0px;height:17.0px;background:rgba(95,174,58,0.55);border-radius:3px;"></div>
<div class="b" style="left:1576.0px;top:163.0px;width:17.0px;height:16.0px;background:rgba(61,181,74,0.35);border-radius:3px;"></div>
<div class="b" style="left:1599.0px;top:166.0px;width:35.0px;height:10.0px;background:rgba(22,114,196,0.26);border-radius:3px;"></div>
<div class="b" style="left:1704.0px;top:166.0px;width:40.0px;height:10.0px;background:rgba(22,114,196,0.26);border-radius:3px;"></div>
<div class="b" style="left:63.0px;top:203.0px;width:7.0px;height:10.0px;background:rgba(17,17,17,0.25);border-radius:3px;"></div>
<div class="b" style="left:93.0px;top:203.0px;width:44.0px;height:10.0px;background:rgba(22,114,196,0.26);border-radius:3px;"></div>
<div class="b" style="left:365.0px;top:203.0px;width:30.0px;height:10.0px;background:rgba(22,114,196,0.26);border-radius:3px;"></div>
<div class="b" style="left:492.0px;top:203.0px;width:55.0px;height:10.0px;background:rgba(17,17,17,0.26);border-radius:3px;"></div>
<div class="b" style="left:709.5px;top:203.0px;width:21.5px;height:10.0px;background:rgba(22,114,196,0.26);border-radius:3px;"></div>
<div class="b" style="left:794.0px;top:203.0px;width:21.5px;height:10.0px;background:rgba(22,114,196,0.26);border-radius:3px;"></div>
<div class="b" style="left:857.5px;top:203.0px;width:21.5px;height:10.0px;background:rgba(22,114,196,0.26);border-radius:3px;"></div>
<div class="b" style="left:938.0px;top:203.0px;width:21.5px;height:10.0px;background:rgba(22,114,196,0.26);border-radius:3px;"></div>
<div class="b" style="left:1165.5px;top:203.0px;width:21.5px;height:10.0px;background:rgba(22,114,196,0.26);border-radius:3px;"></div>
<div class="b" style="left:582.0px;top:203.0px;width:22.0px;height:10.0px;background:rgba(22,114,196,0.26);border-radius:3px;"></div>
<div class="b" style="left:1025.0px;top:203.0px;width:22.0px;height:10.0px;background:rgba(22,114,196,0.26);border-radius:3px;"></div>
<div class="b" style="left:1294.0px;top:203.0px;width:22.0px;height:10.0px;background:rgba(22,114,196,0.26);border-radius:3px;"></div>
<div class="b" style="left:1424.0px;top:201.0px;width:18.0px;height:14.0px;background:rgba(42,127,159,0.25);border-radius:3px;"></div>
<div class="b" style="left:1576.0px;top:200.0px;width:17.0px;height:16.0px;background:rgba(61,181,74,0.35);border-radius:3px;"></div>
<div class="b" style="left:1599.0px;top:203.0px;width:35.0px;height:10.0px;background:rgba(22,114,196,0.26);border-radius:3px;"></div>
<div class="b" style="left:1704.0px;top:203.0px;width:40.0px;height:10.0px;background:rgba(22,114,196,0.26);border-radius:3px;"></div>
<div class="b" style="left:63.0px;top:241.0px;width:7.0px;height:10.0px;background:rgba(17,17,17,0.25);border-radius:3px;"></div>
<div class="b" style="left:93.0px;top:241.0px;width:104.0px;height:10.0px;background:rgba(22,114,196,0.26);border-radius:3px;"></div>
<div class="b" style="left:365.0px;top:241.0px;width:30.0px;height:10.0px;background:rgba(22,114,196,0.26);border-radius:3px;"></div>
<div class="b" style="left:492.0px;top:241.0px;width:55.0px;height:10.0px;background:rgba(17,17,17,0.26);border-radius:3px;"></div>
<div class="b" style="left:709.5px;top:241.0px;width:21.5px;height:10.0px;background:rgba(22,114,196,0.26);border-radius:3px;"></div>
<div class="b" style="left:794.0px;top:241.0px;width:21.5px;height:10.0px;background:rgba(22,114,196,0.26);border-radius:3px;"></div>
<div class="b" style="left:857.5px;top:241.0px;width:21.5px;height:10.0px;background:rgba(22,114,196,0.26);border-radius:3px;"></div>
<div class="b" style="left:1165.5px;top:241.0px;width:21.5px;height:10.0px;background:rgba(22,114,196,0.26);border-radius:3px;"></div>
<div class="b" style="left:310.0px;top:234.0px;width:12.0px;height:8.0px;background:rgba(154,205,50,0.5);border-radius:3px;"></div>
<div class="b" style="left:582.0px;top:241.0px;width:22.0px;height:10.0px;background:rgba(22,114,196,0.26);border-radius:3px;"></div>
<div class="b" style="left:939.0px;top:240.0px;width:15.0px;height:12.0px;background:rgba(58,48,16,0.5);border-radius:3px;"></div>
<div class="b" style="left:954.0px;top:241.0px;width:48.0px;height:10.0px;background:rgba(106,80,32,0.4);border-radius:3px;"></div>
<div class="b" style="left:1025.0px;top:241.0px;width:22.0px;height:10.0px;background:rgba(22,114,196,0.26);border-radius:3px;"></div>
<div class="b" style="left:1294.0px;top:241.0px;width:22.0px;height:10.0px;background:rgba(22,114,196,0.26);border-radius:3px;"></div>
<div class="b" style="left:1424.0px;top:238.5px;width:23.0px;height:15.0px;background:rgba(42,127,159,0.3);border-radius:3px;"></div>
<div class="b" style="left:1576.0px;top:238.0px;width:17.0px;height:16.0px;background:rgba(61,181,74,0.35);border-radius:3px;"></div>
<div class="b" style="left:1599.0px;top:241.0px;width:35.0px;height:10.0px;background:rgba(22,114,196,0.26);border-radius:3px;"></div>
<div class="b" style="left:1704.0px;top:241.0px;width:40.0px;height:10.0px;background:rgba(22,114,196,0.26);border-radius:3px;"></div>
<div class="b" style="left:63.0px;top:280.0px;width:7.0px;height:10.0px;background:rgba(17,17,17,0.25);border-radius:3px;"></div>
<div class="b" style="left:93.0px;top:280.0px;width:104.0px;height:10.0px;background:rgba(22,114,196,0.26);border-radius:3px;"></div>
<div class="b" style="left:365.0px;top:280.0px;width:30.0px;height:10.0px;background:rgba(22,114,196,0.26);border-radius:3px;"></div>
<div class="b" style="left:492.0px;top:280.0px;width:55.0px;height:10.0px;background:rgba(17,17,17,0.26);border-radius:3px;"></div>
<div class="b" style="left:709.5px;top:280.0px;width:21.5px;height:10.0px;background:rgba(22,114,196,0.26);border-radius:3px;"></div>
<div class="b" style="left:794.0px;top:280.0px;width:21.5px;height:10.0px;background:rgba(22,114,196,0.26);border-radius:3px;"></div>
<div class="b" style="left:857.5px;top:280.0px;width:21.5px;height:10.0px;background:rgba(22,114,196,0.26);border-radius:3px;"></div>
<div class="b" style="left:938.0px;top:280.0px;width:21.5px;height:10.0px;background:rgba(22,114,196,0.26);border-radius:3px;"></div>
<div class="b" style="left:1165.5px;top:280.0px;width:21.5px;height:10.0px;background:rgba(22,114,196,0.26);border-radius:3px;"></div>
<div class="b" style="left:310.0px;top:271.0px;width:12.0px;height:8.0px;background:rgba(154,205,50,0.4);border-radius:3px;"></div>
<div class="b" style="left:582.0px;top:280.0px;width:22.0px;height:10.0px;background:rgba(22,114,196,0.26);border-radius:3px;"></div>
<div class="b" style="left:1025.0px;top:280.0px;width:22.0px;height:10.0px;background:rgba(22,114,196,0.26);border-radius:3px;"></div>
<div class="b" style="left:1294.0px;top:280.0px;width:22.0px;height:10.0px;background:rgba(22,114,196,0.26);border-radius:3px;"></div>
<div class="b" style="left:1424.0px;top:277.5px;width:30.0px;height:15.0px;background:rgba(42,127,159,0.3);border-radius:3px;"></div>
<div class="b" style="left:1576.0px;top:277.0px;width:17.0px;height:16.0px;background:rgba(240,112,64,0.5);border-radius:3px;"></div>
<div class="b" style="left:1599.0px;top:280.0px;width:35.0px;height:10.0px;background:rgba(22,114,196,0.26);border-radius:3px;"></div>
<div class="b" style="left:1704.0px;top:280.0px;width:40.0px;height:10.0px;background:rgba(22,114,196,0.26);border-radius:3px;"></div>
</div>
</div>
<div class="b" style="left:247px;top:852px;width:1714px;height:22px;background:#f1f1f4;"></div>
<div class="b" style="left:268.5px;top:852px;width:872.0px;height:22px;background:#cdcdd0;"></div>
<svg style="left:0;top:0;pointer-events:none" width="1965" height="908" viewBox="0 0 1965 908" fill="none" stroke-linecap="round" stroke-linejoin="round"><path d="M260.10 857.80L254.70 862.50L260.10 867.20" stroke="#454548" stroke-width="2.5" stroke-linecap="butt" stroke-linejoin="miter"/></svg>
<svg style="left:0;top:0;pointer-events:none" width="1965" height="908" viewBox="0 0 1965 908" fill="none" stroke-linecap="round" stroke-linejoin="round"><path d="M1947.10 857.80L1952.70 862.50L1947.10 867.20" stroke="#454548" stroke-width="2.5" stroke-linecap="butt" stroke-linejoin="miter"/></svg>
<div class="b" style="left:247px;top:873.4px;width:1714px;height:1.0px;background:#dfdfe3;"></div>
<div class="b" style="left:247px;top:875px;width:1714px;height:31px;background:#fcfcfd;"></div>
<svg style="left:0;top:0;pointer-events:none" width="1965" height="908" viewBox="0 0 1965 908" fill="none" stroke-linecap="round" stroke-linejoin="round"><circle cx="263.200" cy="892.300" r="9" stroke="#b7d3e2" stroke-width="1.300" fill="#fbfdfe"/><path d="M263.200 887.500v9.600M258.400 892.300h9.600" stroke="#b7d3e2" stroke-width="1.300"/><circle cx="329.600" cy="892.300" r="9" stroke="#f3bcc0" stroke-width="1.300" fill="#fefbfb"/><path d="M324.800 892.300h9.600" stroke="#f3bcc0" stroke-width="1.300"/><circle cx="413.900" cy="892.200" r="8.600" stroke="#4796c8" stroke-width="1.600" fill="#f6fafd"/><circle cx="413.900" cy="892.200" r="7.100" stroke="#c4deee" stroke-width=".800"/><rect x="409.200" y="889.500" width="5.400" height="4" rx="1.200" stroke="#3b9ad0" stroke-width="1.300"/><rect x="413.300" y="892.300" width="5.800" height="4" rx="1.200" stroke="#3b9ad0" stroke-width="1.300" fill="#f6fafd"/><path d="M492.30 886.76L493.59 887.25L493.31 888.60L491.94 888.55L491.25 889.56L491.82 890.81L490.67 891.58L489.74 890.56L488.54 890.80L488.05 892.09L486.70 891.81L486.75 890.44L485.74 889.75L484.49 890.32L483.72 889.17L484.74 888.24L484.50 887.04L483.21 886.55L483.49 885.20L484.86 885.25L485.55 884.24L484.98 882.99L486.13 882.22L487.06 883.24L488.26 883.00L488.75 881.71L490.10 881.99L490.05 883.36L491.06 884.05L492.31 883.48L493.08 884.63L492.06 885.56Z" stroke="#cfe9d3" stroke-width="1.1" fill="none" stroke-linejoin="round"/><path d="M499.82 893.80L501.43 894.91L500.59 896.95L498.67 896.61L497.23 898.05L497.59 899.97L495.55 900.82L494.43 899.22L492.40 899.22L491.29 900.83L489.25 899.99L489.59 898.07L488.15 896.63L486.23 896.99L485.38 894.95L486.98 893.83L486.98 891.80L485.37 890.69L486.21 888.65L488.13 888.99L489.57 887.55L489.21 885.63L491.25 884.78L492.37 886.38L494.40 886.38L495.51 884.77L497.55 885.61L497.21 887.53L498.65 888.97L500.57 888.61L501.42 890.65L499.82 891.77Z" stroke="#f3b9b0" stroke-width="1.3" fill="#fcfcfd" stroke-linejoin="round"/><circle cx="493.400" cy="892.800" r="3" stroke="#f3b9b0" stroke-width="1.300"/><path d="M596.84 893.05L598.09 893.90L597.46 895.45L595.97 895.17L594.89 896.26L595.18 897.74L593.63 898.39L592.78 897.14L591.25 897.14L590.40 898.39L588.85 897.76L589.13 896.27L588.04 895.19L586.56 895.48L585.91 893.93L587.16 893.08L587.16 891.55L585.91 890.70L586.54 889.15L588.03 889.43L589.11 888.34L588.82 886.86L590.37 886.21L591.22 887.46L592.75 887.46L593.60 886.21L595.15 886.84L594.87 888.33L595.96 889.41L597.44 889.12L598.09 890.67L596.84 891.52Z" stroke="#bfe3c5" stroke-width="1.2" fill="none" stroke-linejoin="round"/><circle cx="592" cy="892.300" r="2.300" stroke="#bfe3c5" stroke-width="1.100"/><circle cx="673.900" cy="892.300" r="9" stroke="#bfe3c4" stroke-width="1.300" fill="#fbfefb"/><path d="M669.400 892.700l3.200 3.200 5.800-6.600" stroke="#bfe3c4" stroke-width="1.500"/><circle cx="760.800" cy="892.300" r="9" stroke="#f3bcc0" stroke-width="1.400" fill="#fefbfb"/><path d="M754.600 886l12.400 12.600" stroke="#f3bcc0" stroke-width="1.400"/><path d="M891.2 888.4h7.200l-3.600 4z" fill="#b3b3b6" stroke="none"/><circle cx="930.800" cy="892.300" r="9" stroke="#2a86c2" stroke-width="1.500" fill="#eaf3fa"/><path d="M927.400 887.400h4.800l2 2v7.400h-6.800z" stroke="#2a86c2" stroke-width="1.100" fill="#fff"/><path d="M929 894.800c1.600-1.600 2.400-3.600 2-5c-.800 1.600 1 4 3 4.400c-1.600-.200-3.600.200-5 .600z" stroke="#2a86c2" stroke-width=".700"/><rect x="1022" y="882.400" width="17.400" height="17.400" rx="2" stroke="#6e6e72" stroke-width="1.300" fill="#fff"/><rect x="1207" y="882.400" width="17.400" height="17.400" rx="2" stroke="#6e6e72" stroke-width="1.300" fill="#fff"/><path d="M1581.5 888.2h7.200l-3.600 4z" fill="#3c3c3e" stroke="none"/><path d="M1653.8 888.2h7.200l-3.600 4z" fill="#b3b3b6" stroke="none"/></svg>
<span class="t" style="left:277.30px;top:884.00px;font-size:15px;line-height:15px;color:#b3b3b6;letter-spacing:-0.275px;">Add</span>
<span class="t" style="left:344.20px;top:884.00px;font-size:15px;line-height:15px;color:#b3b3b6;letter-spacing:0.065px;">Delete</span>
<span class="t" style="left:427.40px;top:884.00px;font-size:15px;line-height:15px;color:#333;letter-spacing:0.013px;">Clone</span>
<span class="t" style="left:506.20px;top:884.00px;font-size:15px;line-height:15px;color:#b3b3b6;letter-spacing:0.214px;">Override</span>
<span class="t" style="left:604.70px;top:884.00px;font-size:15px;line-height:15px;color:#b3b3b6;letter-spacing:-0.185px;">Revert</span>
<span class="t" style="left:690.90px;top:884.00px;font-size:15px;line-height:15px;color:#b3b3b6;letter-spacing:-0.450px;">Enable</span>
<span class="t" style="left:777.50px;top:884.00px;font-size:15px;line-height:15px;color:#b3b3b6;letter-spacing:-0.183px;">Disable</span>
<span class="t" style="left:847.00px;top:884.00px;font-size:15px;line-height:15px;color:#b3b3b6;letter-spacing:0.325px;">Move</span>
<span class="t" style="left:944.70px;top:884.00px;font-size:15px;line-height:15px;color:#333;letter-spacing:-0.133px;">PDF/CSV</span>
<span class="t" style="left:1045.40px;top:887.00px;font-size:15px;line-height:15px;color:#222;letter-spacing:-0.083px;">Highlight Unused Rules</span>
<span class="t" style="left:1229.90px;top:887.00px;font-size:15px;line-height:15px;color:#222;letter-spacing:-0.210px;">View Rulebase as Groups</span>
<span class="t" style="left:1422.30px;top:884.00px;font-size:15px;line-height:15px;color:#3c3c3e;letter-spacing:-0.055px;">Reset Rule Hit Counter</span>
<span class="t" style="left:1606.30px;top:884.00px;font-size:15px;line-height:15px;color:#b3b3b6;letter-spacing:-0.012px;">Group</span>
<span class="t" style="left:1689.00px;top:884.00px;font-size:15px;line-height:15px;color:#3c3c3e;letter-spacing:0.041px;">Test Policy Match</span>
<div class="b" style="left:910.5px;top:881px;width:1.0px;height:20px;background:#dcdce0;"></div>
<div class="b" style="left:1406.5px;top:881px;width:1.0px;height:20px;background:#dcdce0;"></div>
<div class="b" style="left:1675.0px;top:881px;width:1.0px;height:20px;background:#dcdce0;"></div>
<div class="b" style="left:0px;top:906px;width:1965px;height:2px;background:#05070d;"></div>
<div class="b" style="left:1961px;top:0px;width:4px;height:908px;background:#1c1c1c;"></div>
<div class="b" style="left:1961px;top:0px;width:1px;height:908px;background:#0b0b0b;"></div>
</div></body></html>
